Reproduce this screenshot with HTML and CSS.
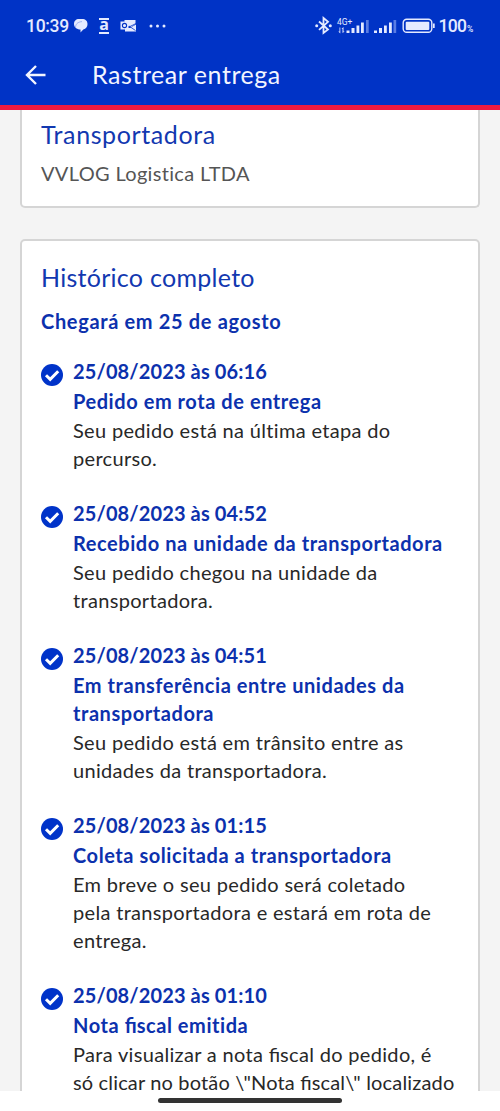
FILE: index.html
```html
<!DOCTYPE html>
<html lang="pt-BR">
<head>
<meta charset="utf-8">
<title>Rastrear entrega</title>
<link rel="stylesheet" href="styles.css">
</head>
<body>
<svg width="0" height="0" class="defs"><symbol id="check" viewBox="0 0 22 22"><circle cx="11" cy="11" r="11" fill="#0033c9"/><path d="M5 11.200l4.200 4.100 8-8" fill="none" stroke="#fff" stroke-width="3"/></symbol></svg>
<div class="screen">
  <header class="header">
    <div class="status">
      <div class="status-left">
        <span class="clock">10:39</span>
        <svg class="i-chat" width="14" height="14" viewBox="0 0 14 14"><path d="M5 0h3c3.500 0 5.500 2 5.500 5 0 2.800-1.500 4.900-4.200 5.500L6.500 13.500v-3C2.500 10.500 0 8 0 5 0 2 2 0 5 0z" fill="#e4eaff"/><path d="M1.500 9C1.500 5.500 3 3 8 2.600" fill="none" stroke="#5a7de3" stroke-width=".5"/></svg>
        <span class="i-a">a</span>
        <svg class="i-outlook" width="17" height="14" viewBox="0 0 17 14"><path d="M4.500 1h11v4L11 8.200 4.500 5z" fill="#e4eaff"/><path d="M5 12.500V9h5l6-3.500v7z" fill="#e4eaff"/><path d="M9 7l6.500 4.500M9 8l7-3.500" stroke="#0033c6" stroke-width=".8" fill="none"/><rect x=".5" y="2.500" width="8" height="8" fill="#e4eaff"/><circle cx="4.500" cy="6.500" r="2.100" fill="none" stroke="#0033c6" stroke-width="1.100"/></svg>
        <svg class="i-dots" width="17" height="4" viewBox="0 0 17 4" fill="#e4eaff"><circle cx="2" cy="2" r="1.500"/><circle cx="8.500" cy="2" r="1.500"/><circle cx="15" cy="2" r="1.500"/></svg>
      </div>
      <div class="status-right">
        <svg width="160" height="20" viewBox="0 0 160 20">
          <g fill="none" stroke="#e4eaff" stroke-width="1.800"><path d="M4 5.500l9 8-4.500 3.500V2l4.500 3.800-9 8"/></g>
          <g fill="#e4eaff"><circle cx="1.700" cy="9.700" r="1.500"/><circle cx="15.300" cy="9.700" r="1.500"/>
          <text x="22" y="9" class="net">4G+</text>
          <path d="M24.500 11.500v4h-1.200l2 2v-6zM27.500 17v-4h-1l2-2v4.500h1.200z"/>
          <path d="M31.500 14.500h3V17h-3zM36.500 12h3v5h-3zM41.500 9.500h2.800V17h-2.800zM46 6.500h2.800V17H46z"/>
          <path d="M59 14.500h3V17h-3zM64 12h3v5h-3zM69 9.500h2.800V17H69zM74 6.500h2.800V17H74z"/>
          <text x="123.500" y="16.200" class="battery">100</text><text x="152" y="16.200" class="percent">%</text></g>
          <path d="M51 4h2.700v13H51zM78.500 4h2.700v13h-2.700z" fill="#5a7de3"/>
          <rect x="88.200" y="3.200" width="28.600" height="13.100" rx="3.500" fill="none" stroke="#e4eaff" stroke-width="1.400"/><rect x="90.700" y="5.700" width="23.600" height="8.200" rx="1" fill="#e4eaff"/><path d="M118 7.500h1.700v4.500H118z" fill="#e4eaff"/>
        </svg>
      </div>
    </div>
    <div class="toolbar">
      <svg width="21" height="20" viewBox="0 0 21 20"><path d="M20.500 10H2M11 1L2 10l9 9" fill="none" stroke="#f2f5ff" stroke-width="2.400"/></svg>
      <h1 class="page-title">Rastrear entrega</h1>
    </div>
  </header>
  <main class="content">
    <section class="card carrier">
      <h2 class="card-title card-title-wide">Transportadora</h2>
      <p class="carrier-name">VVLOG Logistica LTDA</p>
    </section>
    <section class="card history">
      <h2 class="card-title">Histórico completo</h2>
      <p class="arrival">Chegará em 25 de agosto</p>
      <ol class="events">
        <li class="event"><svg class="check"><use href="#check"/></svg><div class="details"><p class="date">25/08/2023 às 06:16</p><p class="name">Pedido em rota de entrega</p><p class="text">Seu pedido está na última etapa do<br>percurso.</p></div></li>
        <li class="event"><svg class="check"><use href="#check"/></svg><div class="details"><p class="date">25/08/2023 às 04:52</p><p class="name">Recebido na unidade da transportadora</p><p class="text">Seu pedido chegou na unidade da<br>transportadora.</p></div></li>
        <li class="event"><svg class="check"><use href="#check"/></svg><div class="details"><p class="date">25/08/2023 às 04:51</p><p class="name">Em transferência entre unidades da<br>transportadora</p><p class="text">Seu pedido está em trânsito entre as<br>unidades da transportadora.</p></div></li>
        <li class="event"><svg class="check"><use href="#check"/></svg><div class="details"><p class="date">25/08/2023 às 01:15</p><p class="name">Coleta solicitada a transportadora</p><p class="text">Em breve o seu pedido será coletado<br>pela transportadora e estará em rota de<br>entrega.</p></div></li>
        <li class="event"><svg class="check"><use href="#check"/></svg><div class="details"><p class="date">25/08/2023 às 01:10</p><p class="name">Nota <span class="lig">fi</span>scal emitida</p><p class="text">Para visualizar a nota <span class="lig">fi</span>scal do pedido, é<br><span class="tight">só clicar no botão \"Nota <span class="lig">fi</span>scal\" localizado</span></p></div></li>
      </ol>
    </section>
  </main>
  <footer class="gesture-bar"><div class="pill"></div></footer>
</div>
</body>
</html>
```
FILE: styles.css
```css
* { box-sizing: border-box; }
body { margin: 0; font-family: Lato, "Open Sans", sans-serif; }
h1, h2, p, ol { margin: 0; padding: 0; font-weight: 400; }
svg { display: block; flex: none; }
.defs { position: absolute; }
.screen { width: 500px; height: 1111px; overflow: hidden; display: flex; flex-direction: column; background: #f4f4f4; }
.header { flex: none; height: 110px; background: #0033c6; border-bottom: 5px solid #ee1a40; color: #f2f5ff; }
.status { height: 50px; padding: 16px 26px 0; display: flex; justify-content: space-between; font-family: Roboto, sans-serif; color: #e4eaff; }
.status-left { display: flex; align-items: center; height: 20px; }
.clock { width: 48px; font-size: 17.500px; font-weight: 500; line-height: 20px; letter-spacing: -.3px; }
.i-a { margin-left: 11px; width: 10px; height: 16px; border-top: 2px solid #e4eaff; border-bottom: 2px solid #e4eaff; font: 700 16px/9px "Open Sans", sans-serif; text-align: center; }
.i-outlook { margin-left: 11px; }
.i-dots { margin-left: 12px; }
.status-right { width: 160px; margin-right: -1px; }
.net { font-size: 8.500px; }
.battery { font-size: 17.500px; font-weight: 500; letter-spacing: -.7px; }
.percent { font-size: 8.500px; font-weight: 500; }
.toolbar { height: 50px; padding-left: 25px; display: flex; align-items: center; gap: 46px; }
.page-title { font-size: 25px; line-height: 34px; letter-spacing: .55px; white-space: nowrap; margin-top: -2px; }
.content { flex: 1; min-height: 0; overflow: hidden; padding: 0 20px; }
.card { background: #fff; border: 2px solid #d5d5d5; border-radius: 5px; padding: 0 19px; white-space: nowrap; }
.carrier { height: 98px; border-top: 0; border-radius: 0 0 5px 5px; padding-top: 7px; }
.card-title { font-size: 25px; line-height: 34px; letter-spacing: .28px; color: #1238b0; }
.card-title-wide { letter-spacing: .6px; }
.carrier-name { margin-top: 8px; font-size: 20px; line-height: 28px; color: #555; letter-spacing: .33px; }
.history { margin-top: 31px; height: 900px; padding-top: 19px; }
.arrival { margin-top: 13px; font-size: 20px; line-height: 28px; font-weight: 700; color: #0c31ad; letter-spacing: .66px; }
.events { margin-top: 22px; list-style: none; display: flex; flex-direction: column; gap: 26px; }
.event { display: flex; gap: 10px; font-size: 20px; line-height: 28px; }
.check { width: 22px; height: 22px; margin-top: 7px; }
.details { display: flex; flex-direction: column; gap: 2px; }
.date, .name { font-weight: 700; color: #0c31ad; }
.date { letter-spacing: .12px; }
.name { letter-spacing: .56px; }
.text { color: #282828; letter-spacing: .32px; margin: -1px 0 1px; }
.tight { letter-spacing: .16px; }
.lig { letter-spacing: 0; }
.gesture-bar { flex: none; height: 20px; padding-top: 7px; background: #fff; }
.pill { width: 184px; height: 5px; margin: 0 auto; border-radius: 3px; background: #333; }
```
